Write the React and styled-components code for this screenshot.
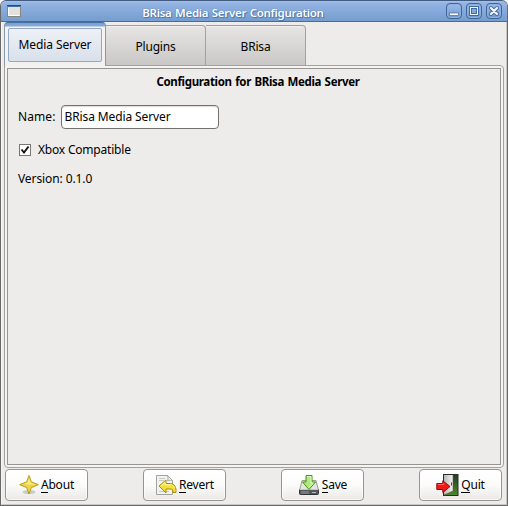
import React from 'react';
import styled, { createGlobalStyle } from 'styled-components';

const GlobalStyle = createGlobalStyle`
  * { box-sizing: border-box; }
  body { margin: 0; background: #fff; }
  button, input { font: inherit; letter-spacing: inherit; color: inherit; }
`;

const Window = styled.div`
  width: 508px;
  height: 506px;
  display: flex;
  flex-direction: column;
  background: #edecea;
  border: 1px solid #686868;
  border-top: 0;
  border-radius: 6px 6px 0 0;
  overflow: hidden;
  font-family: "Noto Sans", "Open Sans", sans-serif;
  font-size: 12px;
  line-height: 16px;
  letter-spacing: -0.2px;
  color: #000;
`;

const TitleBar = styled.header`
  height: 22px;
  flex: none;
  display: grid;
  grid-template-columns: 40px 1fr 82px;
  align-items: center;
  border-top: 1px solid #415a80;
  border-bottom: 1px solid #456c9f;
  border-radius: 5px 5px 0 0;
  background: linear-gradient(#a5c2ec 0, #94b4e2 2px, #759dcf 100%);
`;

const WindowIcon = styled.svg`
  margin-left: 6px;
  display: block;
`;

const Title = styled.h1`
  margin: 3px 0 0;
  justify-self: center;
  font-size: 11.5px;
  line-height: 16px;
  font-weight: 600;
  letter-spacing: -0.28px;
  word-spacing: 0.8px;
  white-space: nowrap;
  color: #fff;
  text-shadow: 0 0 1px #3f679e, 1px 1px 1px #4d75ab;
`;

const Controls = styled.div`
  display: flex;
  gap: 4px;
  justify-content: flex-end;
  margin-right: 5px;
`;

const Control = styled.button`
  width: 16px;
  height: 16px;
  padding: 0;
  border: 1px solid #3f649a;
  border-radius: 4px;
  background: linear-gradient(#9bbbe7, #7099cd);
  box-shadow: inset 0 0 0 1px #8fb0df;
  svg { display: block; }
`;

const Body = styled.main`
  flex: 1;
  display: flex;
  flex-direction: column;
  padding: 0 3px 2px;
  border-left: 1px solid #f7f6f5;
  border-right: 1px solid #c9c7c4;
  border-bottom: 1px solid #c9c7c4;
  min-height: 0;
`;

const Tabs = styled.nav`
  display: flex;
  align-items: flex-end;
  height: 44px;
  margin-left: -1px;
  margin-bottom: -1px;
  flex: none;
  position: relative;
`;

const ActiveTab = styled.div`
  width: 102px;
  height: 44px;
  padding: 5px 3px 3px;
  border: 1px solid #8b98a8;
  border-top: 1px solid #466f9f;
  border-bottom: 0;
  border-radius: 4px 4px 0 0;
  background: linear-gradient(#7ba0d0 0, #86a9d8 3px, #f4f3f2 4px, #f2f1f0 100%);
`;

const TabFocus = styled.div`
  height: 34px;
  display: flex;
  align-items: center;
  justify-content: center;
  border: 1px solid #92a8c5;
  border-radius: 2px;
  background: linear-gradient(#eef1f6, #d8e0ea);
  letter-spacing: -0.1px;
`;

const Tab = styled.div`
  width: ${(p) => p.$width}px;
  height: 41px;
  display: flex;
  align-items: center;
  justify-content: center;
  padding-top: 3px;
  border: 1px solid #a3a19e;
  border-left: 0;
  border-radius: 0 4px 0 0;
  background: linear-gradient(#f0efee 0, #e5e4e2 2px, #c9c8c6 100%);
`;

const Notebook = styled.section`
  flex: 1;
  margin-left: -1px;
  margin-right: -1px;
  min-height: 0;
  display: flex;
  padding: 2px;
  border: 1px solid #a3a19e;
  border-radius: 0 4px 4px 4px;
  background: #f5f4f3;
`;

const Page = styled.div`
  flex: 1;
  border: 1px solid #979592;
  background: #edecea;
  padding: 5px 10px;
`;

const Heading = styled.h2`
  margin: 0 0 14px;
  padding-left: 8px;
  font-size: 11.5px;
  line-height: 16px;
  height: 17px;
  text-align: center;
  letter-spacing: -0.33px;
  word-spacing: 0.8px;
`;

const Field = styled.label`
  display: flex;
  align-items: center;
  gap: 5px;
  height: 24px;
  letter-spacing: 0.1px;
`;

const NameInput = styled.input`
  width: 158px;
  height: 24px;
  padding: 0 3px 1px;
  border: 1px solid #747270;
  border-radius: 4px;
  outline: 0;
  background: #fff;
  box-shadow: inset 0 1px 1px #dddbd9;
  letter-spacing: -0.12px;
`;

const CheckRow = styled.div`
  display: flex;
  align-items: center;
  gap: 7px;
  margin: 13px 0 13px 1px;
  height: 16px;
`;

const Version = styled.p`
  margin: 0;
  letter-spacing: -0.1px;
`;

const Actions = styled.footer`
  display: flex;
  justify-content: space-between;
  height: 33px;
  margin-top: 1px;
  padding-right: 1px;
  flex: none;
`;

const Action = styled.button`
  width: 83px;
  height: 32px;
  padding: 0;
  display: flex;
  align-items: center;
  justify-content: center;
  gap: 2px;
  border: 1px solid #979592;
  border-radius: 4px;
  background: linear-gradient(#fff, #fbfbfa 50%, #eae9e7);
  box-shadow: inset 0 0 0 1px rgba(255, 255, 255, .6);
`;

const Mnemonic = styled.span`
  border-bottom: 1px solid #000;
  display: inline-block;
  line-height: 14px;
`;

const AboutIcon = () => (
  <svg width="20" height="22" viewBox="0 0 20 22">
    <ellipse cx="10" cy="18" rx="6.5" ry="2" fill="#aaa" opacity=".55" />
    <path d="M10 1.500 12.300 7.800 19.300 10.700 12.300 13.600 10 20 7.700 13.600.7 10.700 7.700 7.800Z" fill="#e9d548" stroke="#b99d12" strokeLinejoin="round" />
    <path d="M10 4 11.900 8.800 16.500 10.700H10L5 10 8.100 8.800Z" fill="#fbf49a" opacity=".7" />
  </svg>
);

const RevertIcon = () => (
  <svg width="22" height="22" viewBox="0 0 22 22">
    <path d="M1.500 1.500h11l5 5v14h-16Z" fill="#f2f2f0" stroke="#a2a29e" />
    <path d="M12.500 1.500c1 2 .5 4 0 5 2-.7 4 0 5 0Z" fill="#fff" stroke="#a2a29e" />
    <path d="M4 4.500h6M4 6.500h5M4 17.500h10" stroke="#c8c8c5" />
    <path d="M4 12 11 6v3.500h4.500c4 0 6 4 5.500 9h-3c0-3-.5-3.500-3-3.500h-4v4Z" fill="#f3df3c" stroke="#a98d00" strokeLinejoin="round" />
    <path d="M5.800 12 10 8.500v2.300h5.500c2 0 3 1 4 3" fill="none" stroke="#fff8a5" />
  </svg>
);

const SaveIcon = () => (
  <svg width="22" height="22" viewBox="0 0 22 22">
    <path d="M4 6.500h14l2.500 10H1.500Z" fill="#e3e3e1" stroke="#9b9b98" />
    <rect x="1.500" y="15.500" width="19" height="5" rx="1" fill="#55585a" stroke="#303234" />
    <path d="M2 15.500h18" stroke="#c6c7c7" />
    <path d="M4 17v3M6 17v3M8 17v3M10 17v3" stroke="#999c9d" />
    <path d="M14 18.500h4" stroke="#b7baba" />
    <path d="M8 1.500h6V8h3.500L11 15.500 4.500 8H8Z" fill="#b4e87e" stroke="#459612" />
    <path d="M9 2.500h4V9h2.200L11 13.500" fill="none" stroke="#e2fac7" />
  </svg>
);

const QuitIcon = () => (
  <svg width="23" height="22" viewBox="0 0 23 22">
    <defs>
      <linearGradient id="green" x2="0" y2="1"><stop stopColor="#243b25" /><stop offset="1" stopColor="#4c8a2b" /></linearGradient>
      <linearGradient id="door"><stop stopColor="#b5b5b2" /><stop offset="1" stopColor="#f5f5f4" /></linearGradient>
    </defs>
    <rect x="7.500" y=".5" width="14.500" height="21" fill="url(#green)" stroke="#25302d" />
    <path d="M8 1h9v16L8 21Z" fill="url(#door)" />
    <path d="M17 1v16L8 21" fill="none" stroke="#555" strokeWidth=".6" />
    <path d="M15.500 8.500v3" stroke="#444" />
    <path d="M.8 9.500h6V6.800L14 12.500l-7.200 6v-3h-6Z" fill="#f01818" stroke="#a90000" strokeLinejoin="round" />
    <path d="M1.800 10.500h6V9" fill="none" stroke="#ff6860" />
  </svg>
);

const ACTIONS = [
  ['About', AboutIcon],
  ['Revert', RevertIcon],
  ['Save', SaveIcon],
  ['Quit', QuitIcon],
];

export default function App() {
  return (
    <>
      <GlobalStyle />
      <Window>
        <TitleBar>
          <WindowIcon width="14" height="12" viewBox="0 0 14 12">
            <rect x=".5" y=".5" width="13" height="11" fill="#e2e2dc" stroke="#85867e" />
            <path d="M0 .5h14" stroke="#244b83" />
            <path d="M1 1.500h12" stroke="#3e6dab" />
            <path d="M1.500 3v7.500h11" fill="none" stroke="#fff" />
          </WindowIcon>
          <Title>BRisa Media Server Configuration</Title>
          <Controls>
            <Control aria-label="Minimize">
              <svg width="14" height="14" viewBox="0 0 14 14"><rect x="2.500" y="9" width="9" height="2.500" fill="#fff" stroke="#426aa2" strokeWidth=".7" /></svg>
            </Control>
            <Control aria-label="Maximize">
              <svg width="14" height="14" viewBox="0 0 14 14">
                <rect x="2.500" y="2.500" width="9" height="9" fill="#f0f4fb" stroke="#426aa2" />
                <rect x="4.500" y="4.500" width="5" height="5" fill="#83a8d8" stroke="#426aa2" />
              </svg>
            </Control>
            <Control aria-label="Close">
              <svg width="14" height="14" viewBox="0 0 14 14" strokeLinecap="round"><path d="m4 4 6 6m0-6-6 6" stroke="#426aa2" strokeWidth="4" /><path d="m4 4 6 6m0-6-6 6" stroke="#f4f7fc" strokeWidth="2.200" /></svg>
            </Control>
          </Controls>
        </TitleBar>
        <Body>
          <Tabs>
            <ActiveTab><TabFocus>Media Server</TabFocus></ActiveTab>
            <Tab $width={100}>Plugins</Tab>
            <Tab $width={100}>BRisa</Tab>
          </Tabs>
          <Notebook>
            <Page>
              <Heading>Configuration for BRisa Media Server</Heading>
              <Field>Name: <NameInput defaultValue="BRisa Media Server" /></Field>
              <CheckRow>
                <svg width="12" height="12" viewBox="0 0 12 12"><rect x=".5" y=".5" width="11" height="11" fill="#fff" stroke="#777" /><path d="m2.500 5.500 2.500 3 4.500-6" fill="none" stroke="#111" strokeWidth="1.900" /></svg>
                <span>Xbox Compatible</span>
              </CheckRow>
              <Version>Version: 0.1.0</Version>
            </Page>
          </Notebook>
          <Actions>
            {ACTIONS.map(([label, Icon]) => (
              <Action key={label}>
                <Icon />
                <span><Mnemonic>{label[0]}</Mnemonic>{label.slice(1)}</span>
              </Action>
            ))}
          </Actions>
        </Body>
      </Window>
    </>
  );
}
